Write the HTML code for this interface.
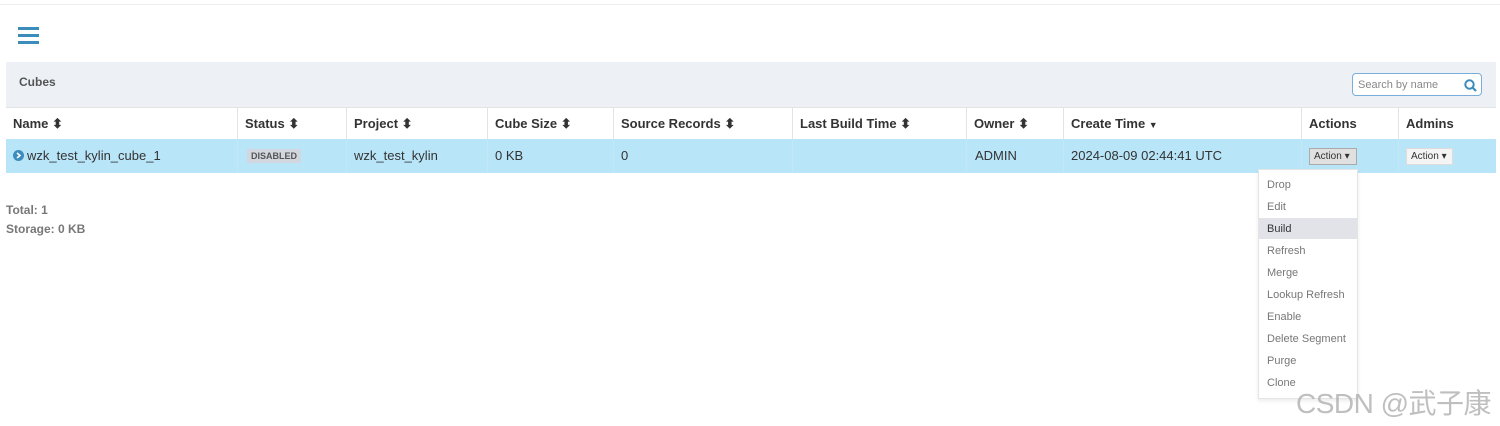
<!DOCTYPE html>
<html><head><meta charset="utf-8"><style>
body{margin:0;width:1500px;height:426px;background:#fff;font-family:"Liberation Sans",sans-serif;position:relative;overflow:hidden;color:#333}
.a{position:absolute}
.hb{background:#3c8dbc;height:3px;width:21px;left:18px}
.th{position:absolute;top:107px;height:32px;line-height:33px;font-size:13px;font-weight:bold;color:#333;padding-left:7px;box-sizing:border-box;border-left:1px solid #e3e3e3}
.td{position:absolute;top:139px;height:34px;line-height:33px;font-size:13px;color:#333;padding-left:7px;box-sizing:border-box;border-left:1px solid #c5e6f4}
.dd{position:absolute;left:1267px;font-size:11px;color:#777}
</style></head><body>
<div class="a" style="left:0;top:4px;width:1500px;height:1px;background:#eee"></div>
<div class="a hb" style="top:27px"></div><div class="a hb" style="top:34px"></div><div class="a hb" style="top:41px"></div>
<div class="a" style="left:6px;top:62px;width:1490px;height:45px;background:#edf1f5"></div>
<div class="a" style="left:19px;top:75px;font-size:12px;font-weight:bold;color:#555">Cubes</div>
<div class="a" style="left:1352px;top:73px;width:130px;height:23px;border:1px solid #79aedb;border-radius:4px;background:#fff;box-sizing:border-box"></div>
<div class="a" style="left:1358px;top:79px;font-size:11px;color:#888">Search by name</div>
<svg class="a" style="left:1464px;top:79px" width="13" height="13"><circle cx="5.5" cy="5.5" r="4.2" stroke="#3c8dbc" stroke-width="2" fill="none"/><line x1="8.5" y1="8.5" x2="12" y2="12" stroke="#3c8dbc" stroke-width="2.2"/></svg>
<div class="a" style="left:6px;top:107px;width:1490px;height:32px;background:#fff;border-top:1px solid #e3e3e3;box-sizing:border-box"></div>
<div class="th" style="left:6px;width:231px;border-left:none">Name ⬍</div>
<div class="th" style="left:237px;width:109px">Status ⬍</div>
<div class="th" style="left:346px;width:141px">Project ⬍</div>
<div class="th" style="left:487px;width:126px">Cube Size ⬍</div>
<div class="th" style="left:613px;width:179px">Source Records ⬍</div>
<div class="th" style="left:792px;width:174px">Last Build Time ⬍</div>
<div class="th" style="left:966px;width:97px">Owner ⬍</div>
<div class="th" style="left:1063px;width:238px">Create Time <span style="font-size:9px">▼</span></div>
<div class="th" style="left:1301px;width:97px">Actions</div>
<div class="th" style="left:1398px;width:98px">Admins</div>
<div class="a" style="left:6px;top:139px;width:1490px;height:34px;background:#b9e5f9"></div>
<svg class="a" style="left:13px;top:150px" width="11" height="11"><circle cx="5.5" cy="5.5" r="5.5" fill="#3c8dbc"/><path d="M4 3l3 2.5-3 2.5" stroke="#fff" stroke-width="1.6" fill="none"/></svg>
<div class="td" style="left:20px;width:217px;border-left:none">wzk_test_kylin_cube_1</div>
<div class="td" style="left:237px;width:109px;padding-left:9px"><span style="background:#d2d6de;color:#555;font-size:9px;font-weight:bold;padding:2px 4px;border-radius:2px;position:relative;top:-1px">DISABLED</span></div>
<div class="td" style="left:346px;width:141px">wzk_test_kylin</div>
<div class="td" style="left:487px;width:126px">0 KB</div>
<div class="td" style="left:613px;width:179px">0</div>
<div class="td" style="left:792px;width:174px"></div>
<div class="td" style="left:966px;width:97px;padding-left:8px">ADMIN</div>
<div class="td" style="left:1063px;width:238px">2024-08-09 02:44:41 UTC</div>
<div class="td" style="left:1301px;width:97px"></div>
<div class="td" style="left:1398px;width:98px"></div>
<div class="a" style="left:1309px;top:148px;width:48px;height:17px;background:#e0e0e0;border:1px solid #aaa;box-sizing:border-box;font-size:10px;line-height:16px;padding-left:4px">Action ▾</div>
<div class="a" style="left:1406px;top:148px;width:47px;height:17px;background:#f4f4f4;border:1px solid #ddd;box-sizing:border-box;font-size:10px;line-height:16px;padding-left:4px">Action ▾</div>
<div class="a" style="left:6px;top:203px;font-size:12px;font-weight:bold;color:#777">Total: 1</div>
<div class="a" style="left:6px;top:222px;font-size:12px;font-weight:bold;color:#777">Storage: 0 KB</div>
<div class="a" style="left:1258px;top:169px;width:100px;height:230px;background:#fff;border:1px solid #e5e5e5;box-shadow:0 2px 4px rgba(0,0,0,.08);box-sizing:border-box"></div>
<div class="a" style="left:1259px;top:218px;width:98px;height:21px;background:#e1e3e9"></div>
<div class="dd" style="top:179px">Drop</div>
<div class="dd" style="top:201px">Edit</div>
<div class="dd" style="top:223px;color:#333">Build</div>
<div class="dd" style="top:245px">Refresh</div>
<div class="dd" style="top:267px">Merge</div>
<div class="dd" style="top:289px">Lookup Refresh</div>
<div class="dd" style="top:311px">Enable</div>
<div class="dd" style="top:333px">Delete Segment</div>
<div class="dd" style="top:355px">Purge</div>
<div class="dd" style="top:377px">Clone</div>
<div class="a" style="left:1296px;top:382px;font-size:28px;color:rgba(175,175,175,.8);font-family:'Liberation Sans','Noto Sans CJK SC',sans-serif;white-space:nowrap;letter-spacing:-0.5px">CSDN @武子康</div>
</body></html>
